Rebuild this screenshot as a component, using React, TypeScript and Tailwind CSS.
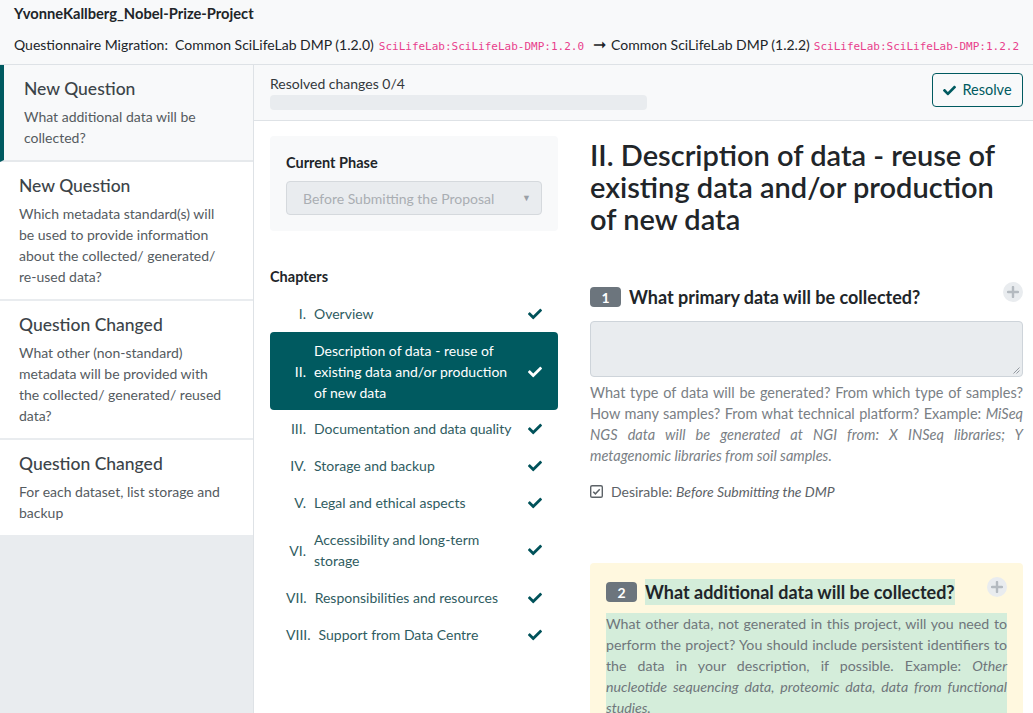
import React from 'react';

const FONT = { fontFamily: 'Lato, "Noto Sans", sans-serif' };
const MONO = { fontFamily: '"DejaVu Sans Mono", "Liberation Mono", monospace' };

const CheckIcon = ({ className = '' }: { className?: string }) => (
  <svg viewBox="0 0 512 512" className={className} fill="currentColor">
    <path d="M173.898 439.404l-166.4-166.4c-9.997-9.997-9.997-26.206 0-36.204l36.203-36.204c9.997-9.998 26.207-9.998 36.204 0L192 312.69 432.095 72.596c9.997-9.997 26.207-9.997 36.204 0l36.203 36.204c9.997 9.997 9.997 26.206 0 36.204l-294.4 294.401c-9.998 9.997-26.207 9.997-36.204-.001z" />
  </svg>
);

const PlusButton = () => (
  <span className="absolute right-0 top-[-2px] flex h-[20px] w-[20px] items-center justify-center rounded-full bg-[#e9ecef]">
    <svg viewBox="0 0 12 12" className="h-[12px] w-[12px]">
      <path d="M6 1v10M1 6h10" stroke="#b4bac0" strokeWidth="2.4" strokeLinecap="round" />
    </svg>
  </span>
);

const changes = [
  { title: 'New Question', text: 'What additional data will be collected?', active: true },
  { title: 'New Question', text: 'Which metadata standard(s) will be used to provide information about the collected/ generated/ re-used data?' },
  { title: 'Question Changed', text: 'What other (non-standard) metadata will be provided with the collected/ generated/ reused data?' },
  { title: 'Question Changed', text: 'For each dataset, list storage and backup' },
];

const chapters = [
  ['I.', 'Overview'],
  ['II.', 'Description of data - reuse of existing data and/or production of new data'],
  ['III.', 'Documentation and data quality'],
  ['IV.', 'Storage and backup'],
  ['V.', 'Legal and ethical aspects'],
  ['VI.', 'Accessibility and long-term storage'],
  ['VII.', 'Responsibilities and resources'],
  ['VIII.', 'Support from Data Centre'],
];

export default function App() {
  return (
    <div className="flex h-[713px] w-[1033px] flex-col overflow-hidden bg-white text-[14px] text-[#212529]" style={FONT}>
      {/* header */}
      <header className="h-[65px] shrink-0 border-b border-[#dee2e6] bg-[#f8f9fa] px-[14px] pt-[3px]">
        <div className="text-[14.7px] font-bold leading-[21px]">YvonneKallberg_Nobel-Prize-Project</div>
        <div className="mt-[9px] flex items-baseline whitespace-nowrap text-[14px] leading-[21px]">
          <span>Questionnaire Migration:&nbsp; Common SciLifeLab DMP (1.2.0)</span>
          <code className="ml-[5px] text-[11px] text-[#e83e8c]" style={MONO}>SciLifeLab:SciLifeLab-DMP:1.2.0</code>
          <span className="ml-[9px] mr-[5px] text-[16px]">➞</span>
          <span>Common SciLifeLab DMP (1.2.2)</span>
          <code className="ml-[4px] text-[11px] text-[#e83e8c]" style={MONO}>SciLifeLab:SciLifeLab-DMP:1.2.2</code>
        </div>
      </header>

      <div className="flex min-h-0 flex-1">
        {/* changes list */}
        <aside className="w-[254px] shrink-0 border-r border-[#dee2e6] bg-[#e9ecef]">
          {changes.map((c, i) => (
            <div
              key={i}
              className={
                c.active
                  ? 'border-b-[2px] border-[#e6e9ec] border-l-[4px] border-l-[#005a60] bg-[#f8f9fa] pb-[12px] pl-[20px] pr-[28px] pt-[12px]'
                  : 'border-b-[2px] border-[#e9ecef] bg-white pb-[12px] pl-[19px] pr-[28px] pt-[12px]'
              }
            >
              <div className="text-[17.5px] font-medium leading-[24px] text-[#3c4449]">{c.title}</div>
              <div className="mt-[5px] text-[14px] leading-[21px] text-[#555b5f]">{c.text}</div>
            </div>
          ))}
        </aside>

        {/* main */}
        <main className="flex min-w-0 flex-1 flex-col">
          <div className="flex h-[56px] shrink-0 items-start justify-between border-b border-[#dee2e6] bg-[#f8f9fa] pl-[16px] pr-[10px]">
            <div className="pt-[9px]">
              <div className="text-[14px] leading-[20px] text-[#33383c]">Resolved changes 0/4</div>
              <div className="mt-[1px] h-[15px] w-[377px] rounded-[4px] bg-[#e9ecef]" />
            </div>
            <button className="mt-[8px] flex h-[34px] w-[91px] items-center justify-center gap-[6px] rounded-[4px] border border-[#005a60] text-[14.5px] text-[#005a60]">
              <CheckIcon className="h-[13px] w-[13px]" />
              Resolve
            </button>
          </div>

          <div className="flex min-h-0 flex-1 gap-[32px] pl-[16px] pr-[10px] pt-[15px]">
            {/* left column */}
            <div className="w-[288px] shrink-0">
              <div className="rounded-[4px] bg-[#f8f9fa] px-[16px] pb-[16px] pt-[16px]">
                <div className="text-[14.5px] font-bold leading-[21px]">Current Phase</div>
                <div className="mt-[8px] flex h-[34px] items-center justify-between rounded-[4px] border border-[#d5d9dd] bg-[#e9ecef] pl-[16px] pr-[10px] text-[14px] text-[#a9aeb3]">
                  <span>Before Submitting the Proposal</span>
                  <span className="text-[9px] text-[#9aa0a6]">▼</span>
                </div>
              </div>

              <div className="mt-[35px] text-[14.5px] font-bold leading-[21px]">Chapters</div>
              <div className="mt-[8px]">
                {chapters.map(([num, name], i) => {
                  const active = i === 1;
                  return (
                    <div
                      key={num}
                      className={
                        active
                          ? 'flex items-center rounded-[4px] bg-[#005a60] pb-[7px] pl-[16px] pr-[16px] pt-[8px] text-[14px] text-white'
                          : 'flex items-center py-[8px] pl-[16px] pr-[16px] text-[14px] text-[#2f5c61]'
                      }
                    >
                      <span className="min-w-[20px] text-right leading-[21px]">{num}</span>
                      <span className="ml-[8px] flex-1 pr-[8px] leading-[21px]">{name}</span>
                      <CheckIcon className={active ? 'h-[14px] w-[14px] text-white' : 'h-[14px] w-[14px] text-[#00525a]'} />
                    </div>
                  );
                })}
              </div>
            </div>

            {/* right column */}
            <div className="min-w-0 flex-1">
              <h1 className="mt-[3px] text-[29px] font-semibold leading-[32px] text-[#212529]">
                II. Description of data - reuse of existing data and/or production of new data
              </h1>

              <div className="mt-[49px]">
                <div className="relative flex items-center pr-[30px]">
                  <span className="flex h-[20px] w-[31px] items-center justify-center rounded-[4px] bg-[#6c757d] text-[14px] font-bold text-white">1</span>
                  <span className="ml-[8px] text-[18px] font-bold leading-[26px]">What primary data will be collected?</span>
                  <PlusButton />
                </div>
                <div className="relative mt-[11px] h-[56px] rounded-[4px] border border-[#ced4da] bg-[#e9ecef]">
                  <svg viewBox="0 0 8 8" className="absolute bottom-[2px] right-[2px] h-[8px] w-[8px]">
                    <path d="M7.5 1.5L1.5 7.5M7.5 4.5L4.5 7.5" stroke="#8a9096" strokeWidth="0.9" />
                  </svg>
                </div>
                <p className="mt-[5px] text-justify text-[14.5px] leading-[21px] text-[#7a8085]">
                  What type of data will be generated? From which type of samples? How many samples? From what technical platform? Example:{' '}
                  <em>MiSeq NGS data will be generated at NGI from: X INSeq libraries; Y metagenomic libraries from soil samples.</em>
                </p>
                <div className="mt-[15px] flex items-center gap-[8px] text-[14px] leading-[21px] text-[#5c6267]">
                  <svg viewBox="0 0 14 14" className="h-[13px] w-[13px]">
                    <rect x="0.75" y="0.75" width="12.5" height="12.5" rx="1.5" fill="none" stroke="#5c6267" strokeWidth="1.5" />
                    <path d="M3.5 7.2l2.3 2.3 4.7-4.9" fill="none" stroke="#5c6267" strokeWidth="1.6" />
                  </svg>
                  <span>
                    Desirable: <em>Before Submitting the DMP</em>
                  </span>
                </div>
              </div>

              <div className="mt-[61px] rounded-[4px] bg-[#fff8df] px-[16px] pt-[16px]">
                <div className="relative flex items-center pr-[30px]">
                  <span className="flex h-[20px] w-[31px] items-center justify-center rounded-[4px] bg-[#6c757d] text-[14px] font-bold text-white">2</span>
                  <span className="ml-[8px] bg-[#d4edda] text-[18px] font-bold leading-[26px]">What additional data will be collected?</span>
                  <PlusButton />
                </div>
                <p className="mt-[8px] bg-[#d4edda] text-justify text-[14.2px] leading-[21px] text-[#6f767b]">
                  What other data, not generated in this project, will you need to perform the project? You should include persistent identifiers to the data in your description, if possible. Example:{' '}
                  <em>Other nucleotide sequencing data, proteomic data, data from functional studies.</em>
                </p>
              </div>
            </div>
          </div>
        </main>
      </div>
    </div>
  );
}
